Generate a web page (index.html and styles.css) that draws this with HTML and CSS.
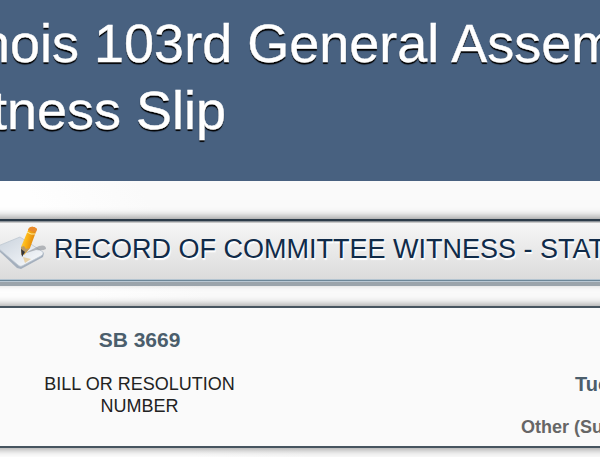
FILE: index.html
```html
<!DOCTYPE html>
<html lang="en">
<head>
<meta charset="utf-8">
<title>Witness Slip</title>
<link rel="stylesheet" href="styles.css">
</head>
<body>
<header class="banner"><h1>Illinois 103rd General Assembly<br>Witness Slip</h1></header>
<main>
  <section class="section-title">
    <svg class="note-icon" viewBox="0 0 48 48" aria-hidden="true">
      <defs>
        <linearGradient id="paper" x1="0" y1="0" x2="1" y2="1"><stop offset="0" stop-color="#c9d2dc"/><stop offset=".65" stop-color="#e9edf2"/><stop offset="1" stop-color="#fff"/></linearGradient>
        <linearGradient id="pencil" x1="0" y1="0" x2="1" y2=".4"><stop offset="0" stop-color="#ffe36a"/><stop offset=".45" stop-color="#fcb514"/><stop offset="1" stop-color="#d9790c"/></linearGradient>
      </defs>
      <path d="M-2 20L21 10L44 25L43 29L21 41L17 40L-2 22Z" fill="#a4afbd"/>
      <path d="M-2 18L20 9L43 24Q44 26 41 28L22 38Q20 39 18 37L-2 20Z" fill="url(#paper)" stroke="#bdc6d1" stroke-width=".8"/>
      <path d="M23 26L39 18Q46 16 46 21Q43 23 36 22Z" fill="#777e85" opacity=".5"/>
      <path d="M23 29L31 31L25 35Z" fill="#e5bd72" opacity=".6"/>
      <path d="M21 19L29 0Q33-3 37 1L30 20L24 27Z" fill="url(#pencil)"/>
      <path d="M29 0Q33-3 37 1L36 4Q31 4 28 2Z" fill="#e98b2d"/>
      <path d="M27 4Q31 7 35 6" fill="none" stroke="#fff0a0"/>
      <path d="M21 19L24 18L26 21L30 20L24 26L21 27Z" fill="#b89a68"/>
      <path d="M21 21L25 24L22 29Z" fill="#343538"/>
    </svg>
    <h2>RECORD OF COMMITTEE WITNESS - STATE</h2>
  </section>
  <section class="details">
    <div class="bill">
      <strong>SB 3669</strong>
      <span>BILL OR RESOLUTION<br>NUMBER</span>
    </div>
    <div class="hearing">
      <strong>Tuesday</strong>
      <b>Other (Subject</b>
    </div>
  </section>
</main>
</body>
</html>
```
FILE: styles.css
```css
* { box-sizing: border-box; }
body {
  margin: 0;
  height: 457px;
  overflow: hidden;
  font-family: "Liberation Sans", Arial, sans-serif;
  background: #fafafa;
}
h1, h2 { margin: 0; font-weight: 400; white-space: nowrap; }
.banner {
  height: 181px;
  padding-top: 10px;
  background: #486180;
  overflow: hidden;
}
h1 {
  margin-left: -71px;
  font-size: 54px;
  line-height: 67px;
  color: #fff;
  -webkit-text-stroke: .4px #fff;
  text-shadow: 0 2px 1px #000;
}
main {
  height: 276px;
  padding-top: 38px;
  overflow: hidden;
  background: linear-gradient(58deg, #fefefe 25%, #fafafa 40%);
}
.section-title {
  display: flex;
  height: 67px;
  margin: 0 -20px;
  padding-left: 20px;
  border-top: 2px solid #2c3b49;
  border-bottom: 4px solid #9ba4ab;
  background: linear-gradient(#f7f7f7, #dadada);
  box-shadow: 0 -3px 8px -1px rgba(0, 0, 0, .42), inset 0 1px #8b9197, inset 0 2px #c8c8c8, inset 0 -1px #b8c6d1, inset 0 -2px #6d8799, inset 0 -3px #b4c4d0;
}
.note-icon { width: 48px; height: 48px; margin-top: 7px; flex: none; overflow: visible; }
h2 {
  margin-left: 6px;
  padding-top: 12px;
  font-size: 27px;
  line-height: 32px;
  color: #102b49;
  text-shadow: 1px 2px 1px #fff;
}
.details {
  display: flex;
  height: 142px;
  margin: 20px -20px 0;
  padding-left: 20px;
  border-top: 2px solid #46545f;
  border-bottom: 2px solid #46545f;
  background: #fafafa;
  box-shadow: 0 0 9px rgba(0, 0, 0, .5);
}
.bill { flex: none; width: 279px; padding-top: 20px; text-align: center; }
.bill strong { display: block; font-size: 21px; line-height: 24px; color: #4b5e6c; }
.bill span { display: block; margin-top: 21px; font-size: 18px; line-height: 22px; color: #222; }
.hearing { flex: none; width: 200px; margin-left: 242px; padding-top: 64px; white-space: nowrap; }
.hearing strong { display: block; margin-left: 54px; font-size: 20px; line-height: 24px; color: #4b5e6c; }
.hearing b { display: block; margin-top: 20px; font-size: 18px; line-height: 22px; color: #666; }
```
